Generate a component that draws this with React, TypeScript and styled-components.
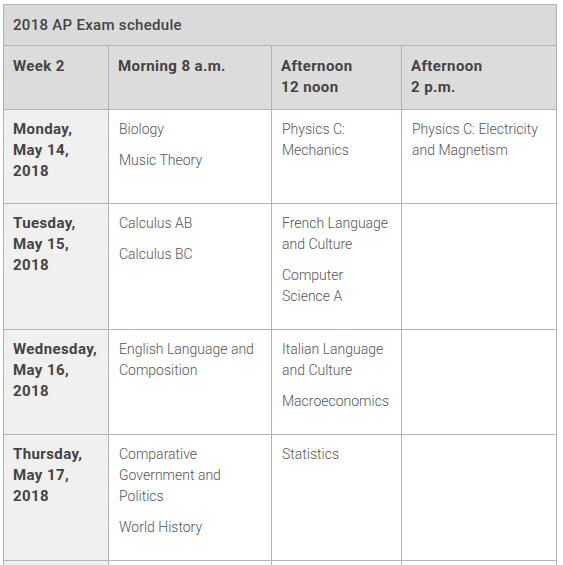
import React from "react";
import styled, { createGlobalStyle } from "styled-components";

const GlobalStyle = createGlobalStyle`
  body {
    margin: 0;
    background: #ffffff;
    font-family: Roboto, "Liberation Sans", sans-serif;
  }
`;

type Day = {
  label: string[];
  morning: string[][];
  noon: string[][];
  afternoon: string[][];
};

const days: Day[] = [
  {
    label: ["Monday,", "May 14,", "2018"],
    morning: [["Biology"], ["Music Theory"]],
    noon: [["Physics C:", "Mechanics"]],
    afternoon: [["Physics C: Electricity", "and Magnetism"]],
  },
  {
    label: ["Tuesday,", "May 15,", "2018"],
    morning: [["Calculus AB"], ["Calculus BC"]],
    noon: [["French Language", "and Culture"], ["Computer", "Science A"]],
    afternoon: [],
  },
  {
    label: ["Wednesday,", "May 16,", "2018"],
    morning: [["English Language and", "Composition"]],
    noon: [["Italian Language", "and Culture"], ["Macroeconomics"]],
    afternoon: [],
  },
  {
    label: ["Thursday,", "May 17,", "2018"],
    morning: [["Comparative", "Government and", "Politics"], ["World History"]],
    noon: [["Statistics"]],
    afternoon: [],
  },
  {
    label: ["Friday,", "May 18,", "2018"],
    morning: [["Human Geography"], ["Microeconomics"]],
    noon: [["European History"]],
    afternoon: [],
  },
];

const rowHeights = [94, 126, 105, 126, 100];

const Schedule = () => {
  return (
    <>
      <GlobalStyle />
      <Wrapper>
        <Table>
          <colgroup>
            <col style={{ width: 105 }} />
            <col style={{ width: 163 }} />
            <col style={{ width: 130 }} />
            <col style={{ width: 155 }} />
          </colgroup>
          <thead>
            <tr>
              <Title colSpan={4}>2018 AP Exam schedule</Title>
            </tr>
            <tr>
              <Head>Week 2</Head>
              <Head>Morning 8 a.m.</Head>
              <Head>
                Afternoon
                <br />
                12 noon
              </Head>
              <Head>
                Afternoon
                <br />
                2 p.m.
              </Head>
            </tr>
          </thead>
          <tbody>
            {days.map((d, i) => (
              <tr key={d.label[0]} style={{ height: rowHeights[i] }}>
                <DayCell>
                  {d.label.map((l) => (
                    <div key={l}>{l}</div>
                  ))}
                </DayCell>
                {[d.morning, d.noon, d.afternoon].map((slot, j) => (
                  <Cell key={j}>
                    {slot.map((exam) => (
                      <Exam key={exam.join(" ")}>
                        {exam.map((line) => (
                          <div key={line}>{line}</div>
                        ))}
                      </Exam>
                    ))}
                  </Cell>
                ))}
              </tr>
            ))}
          </tbody>
        </Table>
      </Wrapper>
    </>
  );
};

const Wrapper = styled.div`
  padding: 4px 0 0 3px;
`;

const Table = styled.table`
  border-collapse: collapse;
  table-layout: fixed;
  width: 553px;
  font-size: 14px;
  line-height: 21px;
`;

const Title = styled.th`
  background-color: #dadada;
  border: 1px solid #b4b4b4;
  color: #444444;
  font-size: 15px;
  font-weight: 500;
  letter-spacing: 0.3px;
  text-align: left;
  height: 41px;
  padding: 0 9px;
  box-sizing: border-box;
`;

const Head = styled.th`
  background-color: #dcdcdc;
  border: 1px solid #b4b4b4;
  color: #444444;
  font-size: 15px;
  font-weight: 700;
  letter-spacing: 0.4px;
  text-align: left;
  vertical-align: top;
  height: 64px;
  padding: 10px 8px 0 9px;
  box-sizing: border-box;
`;

const DayCell = styled.td`
  background-color: #f0f0f0;
  border: 1px solid #b4b4b4;
  color: #444444;
  font-size: 15px;
  font-weight: 700;
  letter-spacing: 0.4px;
  vertical-align: top;
  padding: 9px 4px 0 9px;
`;

const Cell = styled.td`
  background-color: #ffffff;
  border: 1px solid #b4b4b4;
  color: #555555;
  font-weight: 300;
  vertical-align: top;
  padding: 9px 6px 0 10px;
`;

const Exam = styled.div`
  margin-bottom: 10px;
`;

export default Schedule;
